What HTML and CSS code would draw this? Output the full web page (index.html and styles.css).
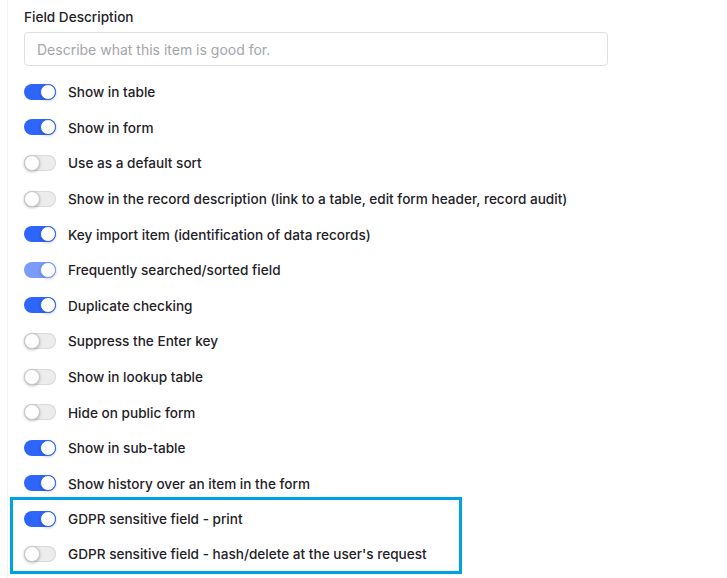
FILE: index.html
```html
<!DOCTYPE html>
<html>
<head>
<meta charset="utf-8">
<link rel="stylesheet" href="styles.css">
</head>
<body>
<div class="panel">
  <label class="field-label">Field Description</label>
  <input class="text-input" type="text" placeholder="Describe what this item is good for.">
  <div class="rows">
    <div class="row"><span class="toggle on"></span><span class="txt">Show in table</span></div>
    <div class="row"><span class="toggle on"></span><span class="txt">Show in form</span></div>
    <div class="row"><span class="toggle"></span><span class="txt">Use as a default sort</span></div>
    <div class="row"><span class="toggle"></span><span class="txt">Show in the record description (link to a table, edit form header, record audit)</span></div>
    <div class="row"><span class="toggle on"></span><span class="txt">Key import item (identification of data records)</span></div>
    <div class="row"><span class="toggle on light"></span><span class="txt">Frequently searched/sorted field</span></div>
    <div class="row"><span class="toggle on"></span><span class="txt">Duplicate checking</span></div>
    <div class="row"><span class="toggle"></span><span class="txt">Suppress the Enter key</span></div>
    <div class="row"><span class="toggle"></span><span class="txt">Show in lookup table</span></div>
    <div class="row"><span class="toggle"></span><span class="txt">Hide on public form</span></div>
    <div class="row"><span class="toggle on"></span><span class="txt">Show in sub-table</span></div>
    <div class="row"><span class="toggle on"></span><span class="txt">Show history over an item in the form</span></div>
    <div class="highlight">
      <div class="row"><span class="toggle on"></span><span class="txt">GDPR sensitive field - print</span></div>
      <div class="row"><span class="toggle"></span><span class="txt">GDPR sensitive field - hash/delete at the user's request</span></div>
    </div>
  </div>
</div>
</body>
</html>
```
FILE: styles.css
```css
html, body {
  margin: 0;
  padding: 0;
  background: #fff;
  height: 100%;
  overflow: hidden;
}
body {
  font-family: Inter, "Noto Sans", sans-serif;
  color: #1f2228;
}
.panel {
  margin-left: 7px;
  border-left: 1px solid #f2f3f5;
  padding: 9px 0 0 16px;
  min-height: 100%;
  box-sizing: border-box;
}
.field-label {
  display: block;
  font-size: 13.6px;
  font-weight: 500;
  line-height: 17px;
  margin-bottom: 6px;
}
.text-input {
  display: block;
  width: 584px;
  height: 34px;
  box-sizing: border-box;
  border: 1px solid #dcdee0;
  border-radius: 4px;
  padding: 0 12px;
  font-family: Inter, "Noto Sans", sans-serif;
  font-size: 14px;
  color: #333;
  outline: none;
  margin: 0;
}
.text-input::placeholder {
  color: #a3a6ab;
}
.rows {
  margin-top: 8px;
}
.row {
  display: flex;
  align-items: center;
  height: 35.6px;
}
.txt {
  font-size: 13.6px;
  font-weight: 500;
  margin-left: 12px;
  white-space: nowrap;
  padding-top: 1px;
}
.toggle {
  position: relative;
  flex: none;
  width: 32px;
  height: 16px;
  border-radius: 8px;
  background: #ececec;
  box-shadow: inset 0 0 0 1px #d9d9d9;
}
.toggle::after {
  content: "";
  position: absolute;
  left: 0;
  top: 0;
  width: 16px;
  height: 16px;
  box-sizing: border-box;
  border-radius: 50%;
  background: #fff;
  border: 1px solid #c8c8c8;
  box-shadow: 0 1px 3px rgba(0,0,0,0.25);
}
.toggle.on {
  background: #2e66fb;
  box-shadow: none;
}
.toggle.on::after {
  left: 16px;
  border-color: #2e66fb;
  box-shadow: 0 1px 3px rgba(0,0,0,0.2);
}
.toggle.on.light {
  background: #7a9bfc;
}
.toggle.on.light::after {
  border-color: #7a9bfc;
}
.highlight {
  width: 452px;
  box-sizing: border-box;
  margin: -4px 0 0 -14px;
  padding: 1px 0 0 11px;
  border: 3px solid #00a2e6;
}
.highlight .row:last-child {
  height: 34px;
}
```
